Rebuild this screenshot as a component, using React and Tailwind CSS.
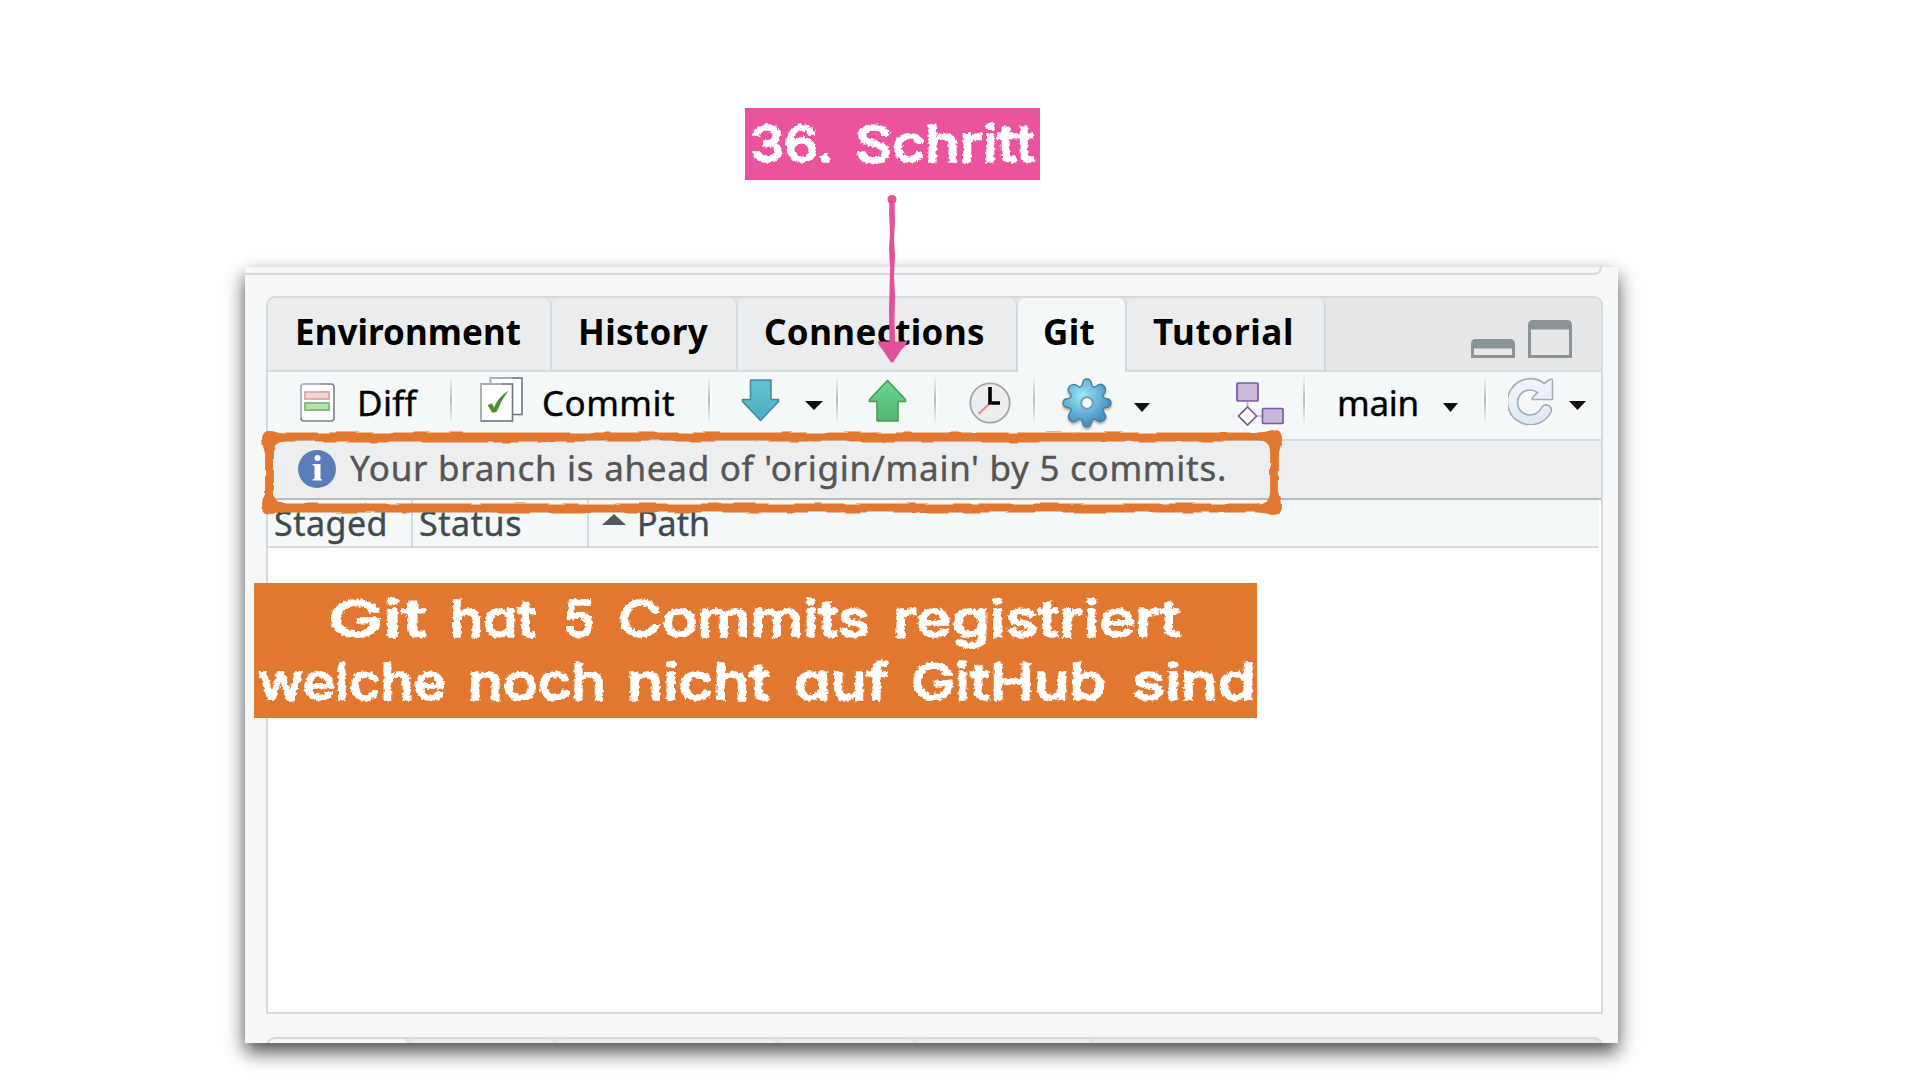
import { useLayoutEffect, useRef, useState } from "react";

// Sets a run of text to an exact width, by tracking or by stretching the glyphs.
function Fit({ text, width, stretch = false, className = "" }) {
  const ref = useRef(null);
  const [style, setStyle] = useState({});
  useLayoutEffect(() => {
    const natural = ref.current.getBoundingClientRect().width;
    if (stretch) {
      setStyle({ transform: `scaleX(${width / natural})`, transformOrigin: "0 50%" });
    } else {
      setStyle({ letterSpacing: `${(width - natural) / text.length}px` });
    }
  }, [text, width, stretch]);
  return (
    <span className={`inline-flex shrink-0 whitespace-pre ${className}`} style={{ width }}>
      <span ref={ref} className="inline-block" style={style}>{text}</span>
    </span>
  );
}

const TABS = [
  { label: "Environment", width: 226, box: "w-[284px] pl-[27px]" },
  { label: "History", width: 130, box: "w-[186px] pl-[26px]" },
  { label: "Connections", width: 221, box: "w-[280px] pl-[26px]" },
  { label: "Git", width: 52, box: "w-[109px] pl-[25px]", active: true },
  { label: "Tutorial", width: 141, box: "w-[199px] pl-[26px]" },
];

function Sep({ className }) {
  return (
    <div className={`mt-[3px] flex h-[50px] w-[4px] shrink-0 ${className}`}>
      <div className="w-[2px] bg-linear-to-b from-[#c4c8ca]/0 via-[#b9bdbf] to-[#c4c8ca]/0" />
      <div className="w-[2px] bg-linear-to-b from-white/0 via-white to-white/0" />
    </div>
  );
}

function Caret({ className }) {
  return (
    <svg className={`h-[9px] shrink-0 ${className}`} viewBox="0 0 17 9" preserveAspectRatio="none">
      <path d="M0 0H17L8.5 9Z" fill="#111" />
    </svg>
  );
}

function DiffIcon() {
  return (
    <svg className="ml-[32px] mt-[11px] h-[39px] w-[35px] shrink-0" viewBox="0 0 35 39">
      <rect x="1" y="1" width="33" height="37" rx="3" fill="#fff" stroke="#7c828c" strokeWidth="1.6" />
      <path d="M1 35V4q0-3 3-3H20" fill="none" stroke="#b9bdc3" strokeWidth="1.6" />
      <rect x="5" y="9" width="24" height="7" fill="#f3d3d4" stroke="#dfa6a8" strokeWidth="1.8" />
      <rect x="5" y="20" width="24" height="7" fill="#b2e2a8" stroke="#76bd75" strokeWidth="1.8" />
    </svg>
  );
}

function CommitIcon() {
  return (
    <svg className="ml-[26px] mt-[5px] h-[45px] w-[43px] shrink-0" viewBox="0 0 43 45">
      <rect x="10.5" y="1" width="31.5" height="36.5" fill="#fff" stroke="#6e7480" strokeWidth="1.6" />
      <path d="M10.5 8V1H32" fill="none" stroke="#b3b7be" strokeWidth="1.6" />
      <rect x="1" y="7" width="31.5" height="37" fill="#fff" stroke="#6e7480" strokeWidth="1.6" />
      <path d="M1 44V7H22" fill="none" stroke="#b3b7be" strokeWidth="1.6" />
      <path d="M8 28.5L11.5 26.5L14 31Q18 21 27.5 14.500Q20.5 24 16.500 34.500L12.5 35.500Z" fill="#4b8f2c" stroke="#4b8f2c" strokeWidth="0.6" />
    </svg>
  );
}

function DownIcon() {
  return (
    <svg className="ml-[29px] mt-[7px] h-[43px] w-[39px] shrink-0" viewBox="0 0 39 43">
      <defs>
        <linearGradient id="down" x1="0" y1="0" x2="0" y2="1">
          <stop offset="0" stopColor="#62c3cf" />
          <stop offset="1" stopColor="#4bacc3" />
        </linearGradient>
      </defs>
      <path d="M9.500 1H30V20.500H37.500V22.500L19.500 41.500L1.500 22.500V20.500H9.500Z" fill="url(#down)" stroke="#4b87a0" strokeWidth="1.6" strokeLinejoin="round" />
    </svg>
  );
}

function UpIcon() {
  return (
    <svg className="ml-[28px] mt-[7px] h-[43px] w-[39px] shrink-0" viewBox="0 0 39 43">
      <defs>
        <linearGradient id="up" x1="0" y1="0" x2="0" y2="1">
          <stop offset="0" stopColor="#66da8e" />
          <stop offset="1" stopColor="#55b277" />
        </linearGradient>
      </defs>
      <path d="M9 42H30V22.500H37.500V20.500L19.500 1.500L1.500 20.500V22.500H9Z" fill="url(#up)" stroke="#4a9f4e" strokeWidth="1.6" strokeLinejoin="round" />
    </svg>
  );
}

function ClockIcon() {
  return (
    <svg className="ml-[31px] mt-[10px] h-[42px] w-[42px] shrink-0" viewBox="0 0 42 42">
      <circle cx="21" cy="21" r="19.7" fill="#ecedef" stroke="#a2a5a8" strokeWidth="1.8" />
      <path d="M20 22L9.500 32" stroke="#f08a8c" strokeWidth="2.200" />
      <path d="M21 5V21H31" fill="none" stroke="#000" strokeWidth="3.600" />
    </svg>
  );
}

// Eight round-tipped teeth with concave valleys between them.
const GEAR =
  "M-4.500-19Q-4-24 0-24T4.500-19Q5-15.500 8-16L11-18Q14.500-20 17-17T18-11L16-8Q15.500-5 19-4.500Q24-4 24 0T19 4.500Q15.500 5 16 8L18 11Q20 14.500 17 17T11 18L8 16Q5 15.500 4.500 19Q4 24 0 24T-4.500 19Q-5 15.500-8 16L-11 18Q-14.500 20-17 17T-18 11L-16 8Q-15.500 5-19 4.500Q-24 4-24 0T-19-4.500Q-15.500-5-16-8L-18-11Q-20-14.500-17-17T-11-18L-8-16Q-5-15.500-4.500-19Z";

function GearIcon() {
  return (
    <svg className="ml-[25px] mt-[6px] h-[52px] w-[50px] shrink-0 drop-shadow-[0_2px_1px_rgba(0,0,0,0.3)]" viewBox="-25 -25 50 52">
      <defs>
        <radialGradient id="gear" cx="0.4" cy="0.35" r="0.6">
          <stop offset="0" stopColor="#9aeaf8" />
          <stop offset="1" stopColor="#4490c4" />
        </radialGradient>
      </defs>
      <path d={GEAR} fill="url(#gear)" stroke="#4d7f9c" strokeWidth="1.4" />
      <circle r="5.8" fill="#f4f8f9" stroke="#7d98a8" strokeWidth="2" />
    </svg>
  );
}

function BranchIcon() {
  return (
    <svg className="ml-[86px] mt-[10px] h-[44px] w-[48px] shrink-0" viewBox="0 0 48 44" fill="#c8b8da" stroke="#7d56a6" strokeWidth="1.7">
      <path d="M11.500 20V26M20 34H27" stroke="#c3a9dc" />
      <rect x="1" y="1" width="21" height="18" rx="1" />
      <path d="M11.500 25L20.500 34L11.500 43L2.500 34Z" fill="#fff" />
      <rect x="26.500" y="26.500" width="20.500" height="15" rx="1" />
    </svg>
  );
}

function RefreshIcon() {
  return (
    <svg className="ml-[20px] mt-[5px] h-[48px] w-[46px] shrink-0" viewBox="0 0 46 48">
      <defs>
        <linearGradient id="refresh" x1="0" y1="0" x2="0" y2="1">
          <stop offset="0" stopColor="#f2f5fa" />
          <stop offset="1" stopColor="#dbe8f9" />
        </linearGradient>
      </defs>
      <path
        d="M36.500 6.500L41 3Q44.500 1 44.500 4V22.500H24.500Q23.500 21.500 25 20L29.500 15.500A12.500 12.500 0 1 0 33.500 30.500Q36.500 26.500 40.500 28.500T43 35A23 23 0 1 1 36.500 6.500Z"
        fill="url(#refresh)"
        stroke="#a4acb8"
        strokeWidth="1.6"
      />
    </svg>
  );
}

function InfoIcon() {
  return (
    <svg className="ml-[30px] h-[38px] w-[38px] shrink-0" viewBox="0 0 38 38">
      <circle cx="19" cy="19" r="19" fill="#5a7db7" />
      <circle cx="19.5" cy="8" r="3" fill="#fff" />
      <path d="M14.500 14H22.500V28.500L24 29.500V30.500H14.500V29.500L16.500 28.500V16L14.500 15Z" fill="#fff" />
    </svg>
  );
}

function WindowButtons() {
  return (
    <div className="ml-auto mr-[29px] flex items-end gap-[13px] self-start pt-[22px]">
      <svg className="h-[19px] w-[44px]" viewBox="0 0 44 19">
        <path fillRule="evenodd" d="M0 19V5Q0 0 5 0H39Q44 0 44 5V19ZM3 16H41V9.500H3Z" fill="#8a9496" />
      </svg>
      <svg className="h-[38px] w-[44px]" viewBox="0 0 44 38">
        <path fillRule="evenodd" d="M0 38V5Q0 0 5 0H39Q44 0 44 5V38ZM3 35H41V9.500H3Z" fill="#8a9496" />
      </svg>
    </div>
  );
}

function TabBar() {
  return (
    <div className="flex h-[74px] shrink-0 overflow-hidden rounded-t-[7px] bg-[#e6e7e9] shadow-[inset_0_-2px_0_#d7dadc]">
      {TABS.map((tab) => (
        <div
          key={tab.label}
          className={`flex shrink-0 rounded-t-[8px] border-r-2 border-[#d7dadc] pt-[10px] text-[35px] leading-[48px] font-bold text-black ${tab.box} ${
            tab.active ? "bg-[#f4f8f9]" : "h-[72px] bg-[#ebecee]"
          }`}
        >
          <Fit text={tab.label} width={tab.width} />
        </div>
      ))}
      <WindowButtons />
    </div>
  );
}

function Toolbar() {
  return (
    <div className="flex h-[69px] shrink-0 items-start border-b-2 border-[#d7dadc] bg-[#f4f8f9] text-[35px] leading-[48px] text-black [-webkit-text-stroke:0.4px_black]">
      <DiffIcon />
      <Fit text="Diff" width={60} className="ml-[22px] mt-[7px]" />
      <Sep className="ml-[33px]" />
      <CommitIcon />
      <Fit text="Commit" width={133} className="ml-[19px] mt-[7px]" />
      <Sep className="ml-[33px]" />
      <DownIcon />
      <Caret className="ml-[25px] mt-[29px] w-[18px]" />
      <Sep className="ml-[13px]" />
      <UpIcon />
      <Sep className="ml-[27px]" />
      <ClockIcon />
      <Sep className="ml-[22px]" />
      <GearIcon />
      <Caret className="ml-[22px] mt-[31px] w-[16px]" />
      <BranchIcon />
      <Sep className="ml-[19px]" />
      <Fit text="main" width={82} className="ml-[30px] mt-[7px]" />
      <Caret className="ml-[24px] mt-[31px] w-[15px]" />
      <Sep className="ml-[26px]" />
      <RefreshIcon />
      <Caret className="ml-[15px] mt-[29px] w-[17px]" />
    </div>
  );
}

const BOTTOM_TABS = ["w-[142px] bg-[#f4f8f9]", "w-[147px] bg-[#ebecee]", "w-[222px] bg-[#ebecee]", "w-[138px] bg-[#ebecee]", "w-[177px] bg-[#ebecee]"];

const NOTE = [
  [
    { text: "Git", width: 99, gap: "ml-[74px]" },
    { text: "hat", width: 86, gap: "ml-[23px]" },
    { text: "5", width: 32, gap: "ml-[27px]" },
    { text: "Commits", width: 252, gap: "ml-[23px]" },
    { text: "registriert", width: 288, gap: "ml-[23px]" },
  ],
  [
    { text: "welche", width: 188, gap: "ml-[4px]" },
    { text: "noch", width: 138, gap: "ml-[22px]" },
    { text: "nicht", width: 143, gap: "ml-[21px]" },
    { text: "auf", width: 95, gap: "ml-[24px]" },
    { text: "GitHub", width: 195, gap: "ml-[22px]" },
    { text: "sind", width: 124, gap: "ml-[26px]" },
  ],
];

const CHALK =
  "font-['Inter','DejaVu_Sans',sans-serif] text-[51px] leading-[63px] font-medium text-white [-webkit-text-stroke:1.6px_white] [font-feature-settings:'cv11'] [filter:url(#chalk)]";

export default function App() {
  return (
    <div className="relative h-[1080px] w-[1920px] overflow-hidden bg-white font-['Noto_Sans',sans-serif]">
      <svg className="absolute h-0 w-0">
        <filter id="chalk" x="-2%" y="-5%" width="104%" height="110%" colorInterpolationFilters="sRGB">
          <feTurbulence type="fractalNoise" baseFrequency="0.3" numOctaves="2" seed="4" />
          <feDisplacementMap in="SourceGraphic" scale="5" xChannelSelector="R" yChannelSelector="G" />
        </filter>
        <filter id="rough" x="-5%" y="-20%" width="110%" height="140%" colorInterpolationFilters="sRGB">
          <feTurbulence type="fractalNoise" baseFrequency="0.03 0.06" numOctaves="2" seed="7" />
          <feDisplacementMap in="SourceGraphic" scale="5" xChannelSelector="R" yChannelSelector="G" />
        </filter>
      </svg>

      <div className="mt-[267px] ml-[245px] flex h-[776px] w-[1373px] flex-col bg-[#f5f7f9] shadow-[0_9px_18px_rgba(0,0,0,0.7)]">
        <div className="h-[8px] w-[1357px] shrink-0 rounded-br-[14px] border-r-2 border-b-2 border-[#d7dadc] bg-[#f4f8f9]" />
        <div className="mt-[21px] ml-[21px] flex h-[718px] w-[1337px] shrink-0 flex-col rounded-t-[9px] border-2 border-[#d7dadc] bg-white">
          <TabBar />
          <Toolbar />
          <div className="flex h-[59px] shrink-0 items-center border-b-2 border-[#b9bcbf] bg-[#edeef0] pb-[2px] text-[35px] text-[#555] [-webkit-text-stroke:0.4px_#555]">
            <InfoIcon />
            <Fit text="Your branch is ahead of 'origin/main' by 5 commits." width={877} className="ml-[14px]" />
          </div>
          <div className="mr-[2px] flex h-[48px] shrink-0 border-b-2 border-[#d7dadc] bg-[#f4f8f9] text-[34px] leading-[46px] text-[#3f4a4e] [-webkit-text-stroke:0.4px_#3f4a4e]">
            <div className="w-[145px] border-r-2 border-[#d7dadc] pl-[6px]">
              <Fit text="Staged" width={114} />
            </div>
            <div className="w-[176px] border-r-2 border-[#d7dadc] pl-[6px]">
              <Fit text="Status" width={103} />
            </div>
            <div className="flex">
              <svg className="mt-[14px] ml-[13px] h-[11px] w-[24px]" viewBox="0 0 24 11">
                <path d="M0 11L12 0L24 11Z" fill="#50595d" />
              </svg>
              <Fit text="Path" width={73} className="ml-[11px]" />
            </div>
          </div>
        </div>
        <div className="mt-[23px] ml-[21px] h-[6px] w-[1337px] overflow-hidden">
          <div className="flex h-[30px] rounded-t-[9px] border-2 border-[#d7dadc] bg-[#e6e7e9]">
            {BOTTOM_TABS.map((box, i) => (
              <div key={i} className={`rounded-t-[8px] border-r-2 border-[#d7dadc] ${box}`} />
            ))}
          </div>
        </div>
      </div>

      <svg className="absolute top-[420px] left-[250px] h-[110px] w-[1050px]" viewBox="250 420 1050 110">
        <g filter="url(#rough)" fill="none" stroke="#e2782f">
          <rect x="269.5" y="437" width="1005" height="71" rx="3" strokeWidth="8.8" />
          <g fill="#e2782f" strokeWidth="0">
            <path d="M262 440Q262 430 272 430Q278 432 286 433V441Q274 442 274 452H265Q262 446 262 440Z" />
            <path d="M1282 440Q1282 430 1272 430Q1266 432 1258 433V441Q1270 442 1270 452H1279Q1282 446 1282 440Z" />
            <path d="M262 505Q262 515 272 515Q278 513 286 512V504Q274 503 274 493H265Q262 499 262 505Z" />
            <path d="M1282 505Q1282 515 1272 515Q1266 513 1258 512V504Q1270 503 1270 493H1279Q1282 499 1282 505Z" />
          </g>
        </g>
      </svg>

      <div className="absolute top-[108px] left-[745px] h-[72px] w-[295px] bg-[#eb539c]">
        <div className={`flex pt-[4px] ${CHALK}`}>
          <Fit text="36." width={83} stretch className="ml-[5px]" />
          <Fit text="Schritt" width={180} stretch className="ml-[22px]" />
        </div>
      </div>

      <svg className="absolute top-[190px] left-[870px] h-[180px] w-[44px]" viewBox="870 190 44 180">
        <g fill="#e5509a">
          <circle cx="892" cy="199.5" r="4.5" />
          <path d="M889.500 200L889 214L890 232L889 250L890 268L889.500 290L889 312L889.500 342H895L894.500 318L895 295L894 276L895 256L894 240L895 222L894.500 200Z" />
          <path d="M878 341Q885 342 892 341Q900 342 907 341Q906 346 902 349L894 361Q892 364 890 361L882 349Q878 345 878 341Z" />
        </g>
      </svg>

      <div className="absolute top-[583px] left-[254px] h-[135px] w-[1003px] bg-[#e2782f]">
        <div className={`pt-[4px] ${CHALK}`}>
          {NOTE.map((line, i) => (
            <div key={i} className="flex">
              {line.map((word) => (
                <Fit key={word.text} text={word.text} width={word.width} stretch className={word.gap} />
              ))}
            </div>
          ))}
        </div>
      </div>
    </div>
  );
}
